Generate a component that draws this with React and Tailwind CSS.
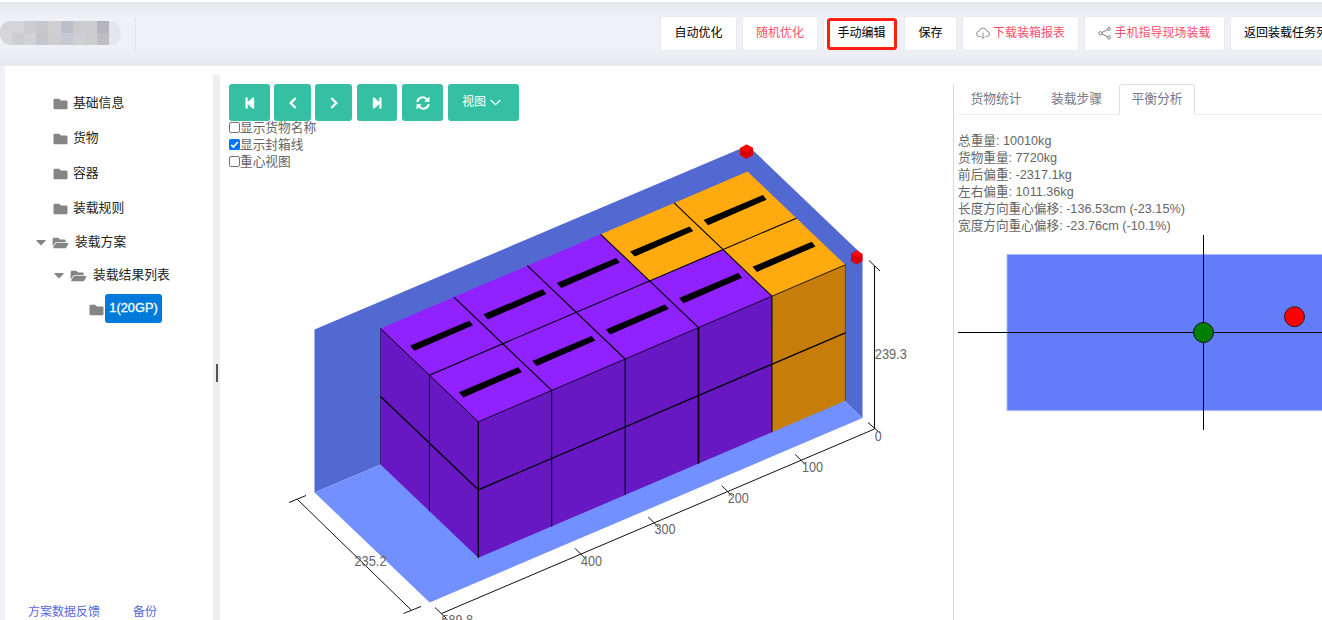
import { FaFolder, FaFolderOpen, FaCaretDown } from "react-icons/fa";

const U = [73.4, -31.4];
const V = [48.9, 46.65];
const A = [380.5, 328.5];
const H = 68;
const at = (i, j, k = 0) => [A[0] + U[0] * i + V[0] * j, A[1] + U[1] * i + V[1] * j + H * k];
const pts = (list) => list.map((p) => p[0].toFixed(1) + "," + p[1].toFixed(1)).join(" ");

function Scene() {
  const tops = [];
  for (let j = 0; j < 2; j++)
    for (let i = 0; i < 5; i++) {
      const orange = i === 4 || (i === 3 && j === 0);
      const [x, y] = at(i, j);
      tops.push(
        <g key={i + "-" + j}>
          <polygon points={pts([at(i, j), at(i + 1, j), at(i + 1, j + 1), at(i, j + 1)])} fill={orange ? "#ffaa0e" : "#8f22ff"} />
          <polygon points={pts([[x + 29.5, y + 17.2], [x + 88.8, y - 7.8], [x + 92.5, y - 3.2], [x + 34, y + 22.3]])} fill="#000" />
        </g>
      );
    }
  const line = (a, b, w = 1) => (
    <line key={a + "|" + b} x1={a[0]} y1={a[1]} x2={b[0]} y2={b[1]} strokeWidth={w} />
  );
  return (
    <svg width="733" height="499" viewBox="220 121 733 499" className="block font-['Liberation_Sans',sans-serif]">
      <polygon points="314.5,329.5 748,145.5 748,309 314.5,492.5" fill="#5369d2" />
      <polygon points="748,145.5 862.5,255 862.5,418 748,309" fill="#5369d2" />
      <polygon points="314.5,492.5 748,309 862.5,418 429.7,602.5" fill="#7290ff" />
      {tops}
      <polygon points={pts([at(0, 0), at(0, 2), at(0, 2, 2), at(0, 0, 2)])} fill="#6718c3" />
      <polygon points={pts([at(0, 2), at(4, 2), at(4, 2, 2), at(0, 2, 2)])} fill="#6718c3" />
      <polygon points={pts([at(4, 2), at(5, 2), at(5, 2, 2), at(4, 2, 2)])} fill="#c77d0a" />
      <g stroke="#000">
        {[1, 2, 3, 4].map((i) => line(at(i, 0), at(i, 2), 1.1))}
        {line(at(0, 1), at(5, 1), 1.1)}
        {line(at(0, 2), at(5, 2), 0.8)}
        {line(at(0, 0), at(0, 2), 0.9)}
        {line(at(0, 0, 1), at(0, 2, 1), 1.3)}
        {line(at(0, 2, 1), at(5, 2, 1), 1.3)}
        {line(at(0, 1), at(0, 1, 2), 1)}
        {line(at(0, 0), at(0, 0, 2), 0.4)}
        {line(at(5, 2), at(5, 2, 2), 0.4)}
        {line(at(0, 2), at(0, 2, 2), 1.2)}
        {line(at(1, 2), at(1, 2, 2))}
        {line(at(2, 2), at(2, 2, 2))}
        {line(at(3, 2), at(3, 2, 2), 1.7)}
        {line(at(4, 2), at(4, 2, 2), 1.1)}
      </g>
      <g>
        <polygon points="746.5,144.5 753,148 753,155 746.5,159 740,155 740,148" fill="#d90000" />
        <polygon points="746.5,144.5 753,148 746.5,152 740,149" fill="#ff0505" />
        <polygon points="856.5,250.5 862.5,254 862.5,261 856.5,264.5 851,261 851,254" fill="#d90000" />
        <polygon points="856.5,250.5 862.5,254 857,257 851,254" fill="#ff0505" />
      </g>
      <g stroke="#111">
        {line([297.5, 499.5], [411.7, 610.5])}
        {line([289, 502.5], [306, 495.5])}
        {line([403.5, 613.5], [421, 606.5])}
        {line([441.5, 613.5], [874.5, 429])}
        {line([435, 607.5], [446, 618])}
        {line([874.5, 266], [874.5, 429], 1.1)}
        {line([869, 260.5], [880, 271])}
        {line([868, 422.5], [880, 433])}
        {[[800.6, 460.3], [727.3, 491.7], [653.8, 523], [580.5, 554.3]].map((p) => line([p[0] - 5.5, p[1] - 6], [p[0] + 4.5, p[1] + 4]))}
      </g>
      <g fill="#666" fontSize="14">
        <text x="354.5" y="566" textLength="32" lengthAdjust="spacingAndGlyphs">235.2</text>
        <text x="874.8" y="359" textLength="32" lengthAdjust="spacingAndGlyphs">239.3</text>
        <text x="874.8" y="441" textLength="7" lengthAdjust="spacingAndGlyphs">0</text>
        <text x="802" y="472" textLength="21" lengthAdjust="spacingAndGlyphs">100</text>
        <text x="727.8" y="503" textLength="21" lengthAdjust="spacingAndGlyphs">200</text>
        <text x="654.5" y="534" textLength="21" lengthAdjust="spacingAndGlyphs">300</text>
        <text x="580.9" y="566" textLength="21" lengthAdjust="spacingAndGlyphs">400</text>
        <text x="441.5" y="625" textLength="31.5" lengthAdjust="spacingAndGlyphs">589.8</text>
      </g>
    </svg>
  );
}

function Balance() {
  return (
    <svg width="364" height="196" viewBox="958 235 364 196" className="block">
      <rect x="1007" y="254.5" width="400" height="156" fill="#637cf8" stroke="#a9b7fb" />
      <path d="M958 332.5H1322M1203.5 235V430" stroke="#000" fill="none" />
      <circle cx="1203.5" cy="332.5" r="10" fill="#008000" stroke="#111" />
      <circle cx="1294.5" cy="316.7" r="10" fill="#f00" stroke="#222" />
    </svg>
  );
}

const CloudDown = () => (
  <svg width="14" height="14" viewBox="0 0 14 14" fill="none" stroke="#8b8d98" strokeWidth="1" className="mr-[3px]">
    <path d="M4.6 10.5H3.4A2.6 2.6 0 0 1 3 5.3A4.1 4.1 0 0 1 11 5.3A2.6 2.6 0 0 1 10.8 10.5H9.6M7 6.5V12.3M5.2 10.6L7 12.4L8.8 10.6" />
  </svg>
);
const Share = () => (
  <svg width="14" height="14" viewBox="0 0 14 14" fill="none" stroke="#777a85" strokeWidth="1" className="mr-[2px]">
    <circle cx="2.4" cy="7.2" r="1.6" />
    <circle cx="11" cy="2.9" r="1.4" />
    <circle cx="11" cy="11.5" r="1.6" />
    <path d="M3.9 6.5L9.7 3.6M3.9 7.9L9.5 10.8" />
  </svg>
);

const top = "flex h-[35px] shrink-0 items-center justify-center rounded-[3px] border border-[#e9eaf1] bg-white pb-px text-[12px] whitespace-nowrap";

function Row({ className, open, caret, children }) {
  return (
    <div className={"flex shrink-0 items-center text-[12.8px] text-[#222] " + className}>
      {caret && <FaCaretDown className="mr-[5px] -mt-px h-[16px] w-[12px] text-[#858585]" />}
      {open ? <FaFolderOpen className="mt-[2px] h-[14px] w-[17px] text-[#858585]" /> : <FaFolder className="mt-[2px] h-[14px] w-[15px] text-[#858585]" />}
      {children}
    </div>
  );
}

const green = "flex h-[37px] items-center justify-center rounded-[3px] bg-[#35bfa3] text-white";

function Check({ on, children }) {
  return (
    <div className="flex h-[17px] items-center text-[12.7px] text-[#666]">
      {on ? (
        <svg width="11" height="11" viewBox="0 0 11 11" className="-mt-[3px] shrink-0">
          <rect width="11" height="11" rx="1.5" fill="#0075ff" />
          <path d="M2.2 5.8L4.4 8L8.8 3" stroke="#fff" strokeWidth="1.7" fill="none" />
        </svg>
      ) : (
        <span className="-mt-[3px] block h-[11px] w-[11px] shrink-0 rounded-[2px] border border-[#767676]" />
      )}
      <span>{children}</span>
    </div>
  );
}

export default function App() {
  return (
    <div className="flex h-[620px] w-[1322px] flex-col overflow-hidden bg-[#f0f1f7] font-['Liberation_Sans','Noto_Sans_CJK_SC',sans-serif]">
      <div className="h-[2px] shrink-0 bg-white" />
      <header className="flex h-[64px] shrink-0 bg-[linear-gradient(to_bottom,#e7e8ee_0,#f0f1f7_16px,#f0f1f7_44px,#e9eaef_64px)]">
        <div className="mt-[19px] flex h-[24px] w-[121px] shrink-0 overflow-hidden rounded-[11px] bg-[#e4e6ed]">
          <div className="grid w-[109px] shrink-0 grid-cols-9 grid-rows-2">
            {["#d4d4d9", "#d4d4d8", "#cbcbd1", "#c8c7cb", "#cfcfd0", "#bbbfca", "#cacacf", "#cccccf", "#b5b4ba", "#d5d5da", "#cecdd1", "#d1d1d6", "#c6c5cb", "#cececf", "#c5c9d5", "#cfcfd4", "#cdcdce", "#bebdc3"].map((c, i) => (
              <div key={i} style={{ background: c }} />
            ))}
          </div>
        </div>
        <div className="mt-[15px] ml-[14px] h-[34px] w-px shrink-0 bg-[#e2e3e9]" />
        <div className="mt-[14px] ml-[524px] flex shrink-0">
          <div className={top + " w-[77px]"}>自动优化</div>
          <div className={top + " ml-[5px] w-[76px] text-[#fb4e6c]"}>随机优化</div>
          <div className={top + " relative ml-[5px] w-[77px]"}>
            手动编辑
            <span className="absolute top-px left-[3px] h-[32px] w-[70px] rounded-[3px] border-[3px] border-[#ff1e10]" />
          </div>
          <div className={top + " ml-[4px] w-[53px]"}>保存</div>
          <div className={top + " ml-[5px] w-[117px] text-[#fb4e6c]"}><CloudDown />下载装箱报表</div>
          <div className={top + " ml-[5px] w-[141px] text-[#fb4e6c]"}><Share />手机指导现场装载</div>
          <div className={top + " ml-[5px] w-[124px]"}>返回装载任务列表</div>
        </div>
      </header>
      <main className="ml-[5px] flex h-[554px] shrink-0 bg-white">
        <aside className="flex w-[208px] shrink-0 flex-col pt-[19px]">
          <Row className="h-[35px] pl-[48px]"><span className="ml-[5px]">基础信息</span></Row>
          <Row className="h-[35px] pl-[48px]"><span className="ml-[5px]">货物</span></Row>
          <Row className="h-[35px] pl-[48px]"><span className="ml-[5px]">容器</span></Row>
          <Row className="h-[35px] pl-[48px]"><span className="ml-[5px]">装载规则</span></Row>
          <Row className="h-[34px] pl-[30px]" open caret><span className="ml-[6px]">装载方案</span></Row>
          <Row className="h-[32px] pl-[48px]" open caret><span className="ml-[6px]">装载结果列表</span></Row>
          <Row className="h-[36px] pl-[84px]">
            <span className="ml-px -mt-px flex h-[29px] w-[57px] items-center justify-center rounded-[3px] bg-[#007bdc] pb-[2px] text-[12.8px] text-white [-webkit-text-stroke:0.3px_white]">1(20GP)</span>
          </Row>
          <div className="mt-[276px] flex shrink-0 gap-[33px] pl-[23px] text-[12px] leading-[18px] text-[#5867dd]"><span>方案数据反馈</span><span>备份</span></div>
        </aside>
        <div className="mt-[9px] flex w-[7px] shrink-0 flex-col items-end bg-[#eee] pt-[289px] pr-[2px]"><div className="h-[18px] w-[2px] bg-[#555]" /></div>
        <section className="flex w-[733px] shrink-0 flex-col">
          <div className="flex h-[55px] pt-[18px] pl-[9px]">
            <div className={green + " w-[41px]"}><svg width="10" height="12" viewBox="0 0 10 12" fill="#fff"><path d="M0.5 0.5H2.7V5L7.6 0.5H9.2V11.5H7.6L2.7 7V11.5H0.5Z" /></svg></div>
            <div className={green + " ml-[4px] w-[37px]"}><svg width="10" height="12" viewBox="0 0 10 12" fill="none" stroke="#fff" strokeWidth="2.4"><path d="M7.7 1L2.7 6L7.7 11" /></svg></div>
            <div className={green + " ml-[4px] w-[37px]"}><svg width="10" height="12" viewBox="0 0 10 12" fill="none" stroke="#fff" strokeWidth="2.4"><path d="M2.3 1L7.3 6L2.3 11" /></svg></div>
            <div className={green + " ml-[5px] w-[40px]"}><svg width="10" height="12" viewBox="0 0 10 12" fill="#fff"><path d="M9.5 0.5H7.3V5L2.4 0.5H0.8V11.5H2.4L7.3 7V11.5H9.5Z" /></svg></div>
            <div className={green + " ml-[5px] w-[41px]"}>
              <svg width="14" height="14" viewBox="0 0 14 14" fill="none" stroke="#fff" strokeWidth="2"><path d="M1.3 6A5.4 5.4 0 0 1 11 3.6M12.7 8A5.4 5.4 0 0 1 3 10.4" /><path d="M13.5 0.5V5.8H8.2ZM0.5 13.5V8.2H5.8Z" fill="#fff" stroke="none" /></svg>
            </div>
            <div className={green + " ml-[5px] w-[71px] gap-[4px] pr-[4px] text-[12px]"}><span className="-mt-px">视图</span><svg width="11" height="7" viewBox="0 0 11 7" fill="none" stroke="#fff" strokeWidth="1.2"><path d="M0.7 1L5.5 5.7L10.3 1" /></svg></div>
          </div>
          <div className="relative">
            <Scene />
            <div className="absolute top-[-1px] left-[9px]">
              <Check>显示货物名称</Check>
              <Check on>显示封箱线</Check>
              <Check>重心视图</Check>
            </div>
          </div>
        </section>
        <section className="mt-[18px] flex w-[369px] shrink-0 flex-col overflow-hidden border-l border-[#d9d9de]">
          <div className="ml-[4px] flex h-[31px] border-b border-[#ebedf2] text-[12.8px] text-[#74788d]">
            <div className="flex w-[80px] items-center justify-center pr-[4px] pb-px">货物统计</div>
            <div className="flex w-[81px] items-center justify-center pr-[4px] pb-px">装载步骤</div>
            <div className="flex h-[31px] w-[76px] items-center justify-center rounded-t-[3px] border border-b-white border-[#dfe1ea] bg-white pb-px">平衡分析</div>
          </div>
          <div className="mt-[18px] ml-[4px] h-[102px] text-[12.65px] leading-[17px] text-[#666]">
            <div>总重量: 10010kg</div>
            <div>货物重量: 7720kg</div>
            <div>前后偏重: -2317.1kg</div>
            <div>左右偏重: 1011.36kg</div>
            <div>长度方向重心偏移: -136.53cm (-23.15%)</div>
            <div>宽度方向重心偏移: -23.76cm (-10.1%)</div>
          </div>
          <div className="ml-[4px]"><Balance /></div>
        </section>
      </main>
    </div>
  );
}
